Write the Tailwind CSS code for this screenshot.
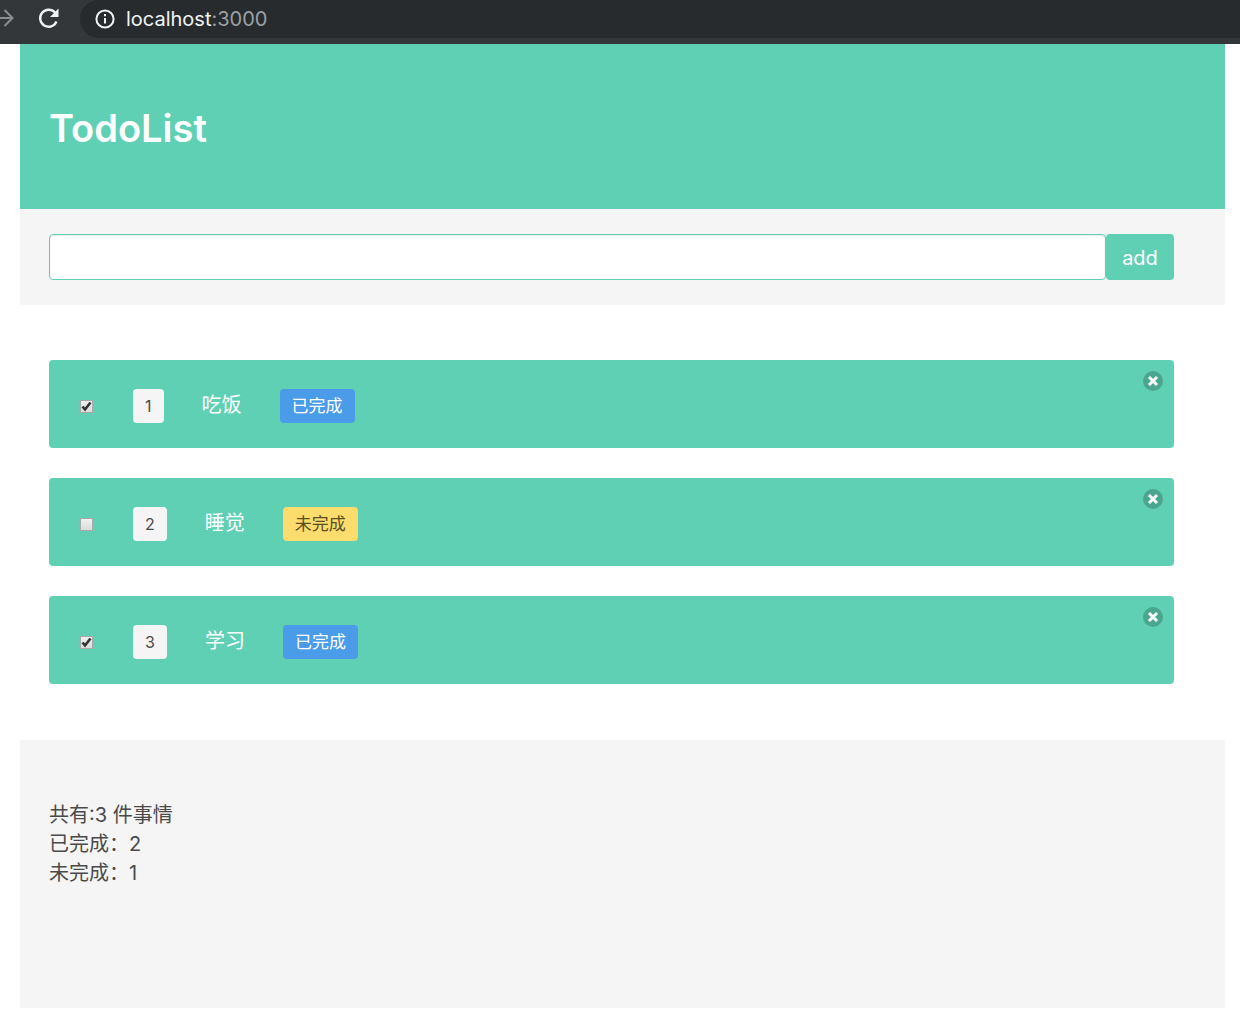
<!DOCTYPE html>
<html lang="zh-CN">
<head>
<meta charset="utf-8">
<meta name="viewport" content="width=device-width, initial-scale=1">
<title>TodoList</title>
<script src="https://cdn.jsdelivr.net/npm/@tailwindcss/browser@4"></script>
</head>
<body class="min-h-screen overflow-x-hidden bg-white font-['Inter','Noto_Sans_CJK_SC',sans-serif] text-xl text-[#4a4a4a]">
  <!-- Browser toolbar -->
  <div class="flex h-11 items-start bg-[#34373a] text-white">
    <button type="button" aria-label="Forward" class="mt-2 h-5 w-4 shrink-0 text-[#8b8e91]">
      <svg class="h-5 w-4" viewBox="0 0 16 20" fill="none" stroke="currentColor" stroke-width="2"><path d="M-4 10H12M4.500 2L12.500 10L4.500 18"/></svg>
    </button>
    <button type="button" aria-label="Reload" class="mt-1.5 ml-5 h-6 w-6 shrink-0">
      <svg class="h-6 w-6" viewBox="0 0 24 24" fill="none"><path d="M20.500 15.500A8.500 8.500 0 1 1 19 6.500" stroke="#f1f3f4" stroke-width="2.400"/><path d="M22.500 2.500V11H14Z" fill="#f1f3f4"/></svg>
    </button>
    <div class="ml-5 flex h-[38px] min-w-0 flex-1 items-center rounded-l-full bg-[#282b2e] pl-3.5">
      <svg class="h-[22px] w-[22px] shrink-0" viewBox="0 0 22 22" fill="none" stroke="#f1f3f4" stroke-width="2"><circle cx="11" cy="11" r="8.600"/><path d="M11 10v5.500M11 6v2.200"/></svg>
      <span class="ml-2.5 text-[#f1f3f4]">localhost<span class="text-[#9aa0a6]">:3000</span></span>
    </div>
  </div>

  <main class="mr-[15px] ml-5">
    <header class="flex h-[165px] items-center bg-[#60d0b5] px-[29px] pt-1">
      <h1 class="text-[38px] font-semibold text-white">TodoList</h1>
    </header>

    <form class="flex bg-[#f5f5f5] py-[25px] pr-[51px] pl-[29px]">
      <input type="text" aria-label="New todo" class="h-[46px] min-w-0 flex-1 rounded border border-[#60d0b5] bg-white px-3 shadow-[inset_0_1px_2px_rgba(10,10,10,0.1)] outline-none">
      <button type="button" class="h-[46px] w-[68px] rounded bg-[#60d0b5] pt-0.5 text-center text-white">add</button>
    </form>

    <ul class="flex flex-col gap-[30px] pt-[55px] pr-[51px] pb-14 pl-[29px]">
      <li class="relative flex h-[88px] items-center rounded bg-[#60d0b5] pl-[31px] text-white">
        <span class="relative mt-1 flex h-[13px] w-[13px]">
          <input type="checkbox" checked aria-label="吃饭" class="peer h-[13px] w-[13px] appearance-none border border-[#a9a9a9] bg-linear-to-b from-[#f0f0f0] to-[#dcdcdc]">
          <svg class="pointer-events-none absolute inset-0 hidden h-[13px] w-[13px] peer-checked:block" viewBox="0 0 13 13" fill="none" stroke="#333" stroke-width="2.600"><path d="M2.500 6.500L5 9.500L10.500 2.500"/></svg>
        </span>
        <span class="mt-1 ml-10 flex h-[34px] items-center rounded bg-[#f5f5f5] px-3 text-base text-[#4a4a4a]">1</span>
        <span class="mt-0.5 ml-[38px]">吃饭</span>
        <span class="mt-1 ml-[38px] flex h-[34px] items-center rounded bg-[#4a9be8] px-3 pt-0.5 text-[17px] text-white">已完成</span>
        <button type="button" aria-label="Delete" class="absolute top-[11px] right-[11px] h-5 w-5 rounded-full bg-[#4ba68f]">
          <svg class="h-5 w-5" viewBox="0 0 20 20" stroke="#fff" stroke-width="3"><path d="M6 6L14 14M14 6L6 14"/></svg>
        </button>
      </li>
      <li class="relative flex h-[88px] items-center rounded bg-[#60d0b5] pl-[31px] text-white">
        <span class="relative mt-1 flex h-[13px] w-[13px]">
          <input type="checkbox" aria-label="睡觉" class="peer h-[13px] w-[13px] appearance-none border border-[#a9a9a9] bg-linear-to-b from-[#f0f0f0] to-[#dcdcdc]">
          <svg class="pointer-events-none absolute inset-0 hidden h-[13px] w-[13px] peer-checked:block" viewBox="0 0 13 13" fill="none" stroke="#333" stroke-width="2.600"><path d="M2.500 6.500L5 9.500L10.500 2.500"/></svg>
        </span>
        <span class="mt-1 ml-10 flex h-[34px] items-center rounded bg-[#f5f5f5] px-3 text-base text-[#4a4a4a]">2</span>
        <span class="mt-0.5 ml-[38px]">睡觉</span>
        <span class="mt-1 ml-[38px] flex h-[34px] items-center rounded bg-[#fbdc6c] px-3 pt-0.5 text-[17px] text-[#5a4e25]">未完成</span>
        <button type="button" aria-label="Delete" class="absolute top-[11px] right-[11px] h-5 w-5 rounded-full bg-[#4ba68f]">
          <svg class="h-5 w-5" viewBox="0 0 20 20" stroke="#fff" stroke-width="3"><path d="M6 6L14 14M14 6L6 14"/></svg>
        </button>
      </li>
      <li class="relative flex h-[88px] items-center rounded bg-[#60d0b5] pl-[31px] text-white">
        <span class="relative mt-1 flex h-[13px] w-[13px]">
          <input type="checkbox" checked aria-label="学习" class="peer h-[13px] w-[13px] appearance-none border border-[#a9a9a9] bg-linear-to-b from-[#f0f0f0] to-[#dcdcdc]">
          <svg class="pointer-events-none absolute inset-0 hidden h-[13px] w-[13px] peer-checked:block" viewBox="0 0 13 13" fill="none" stroke="#333" stroke-width="2.600"><path d="M2.500 6.500L5 9.500L10.500 2.500"/></svg>
        </span>
        <span class="mt-1 ml-10 flex h-[34px] items-center rounded bg-[#f5f5f5] px-3 text-base text-[#4a4a4a]">3</span>
        <span class="mt-0.5 ml-[38px]">学习</span>
        <span class="mt-1 ml-[38px] flex h-[34px] items-center rounded bg-[#4a9be8] px-3 pt-0.5 text-[17px] text-white">已完成</span>
        <button type="button" aria-label="Delete" class="absolute top-[11px] right-[11px] h-5 w-5 rounded-full bg-[#4ba68f]">
          <svg class="h-5 w-5" viewBox="0 0 20 20" stroke="#fff" stroke-width="3"><path d="M6 6L14 14M14 6L6 14"/></svg>
        </button>
      </li>
    </ul>

    <footer class="bg-[#f5f5f5] px-[29px] pt-[61px] pb-[120px] leading-[29px]">
      <p>共有:3 件事情</p>
      <p>已完成：2</p>
      <p>未完成：1</p>
    </footer>
  </main>
</body>
</html>
